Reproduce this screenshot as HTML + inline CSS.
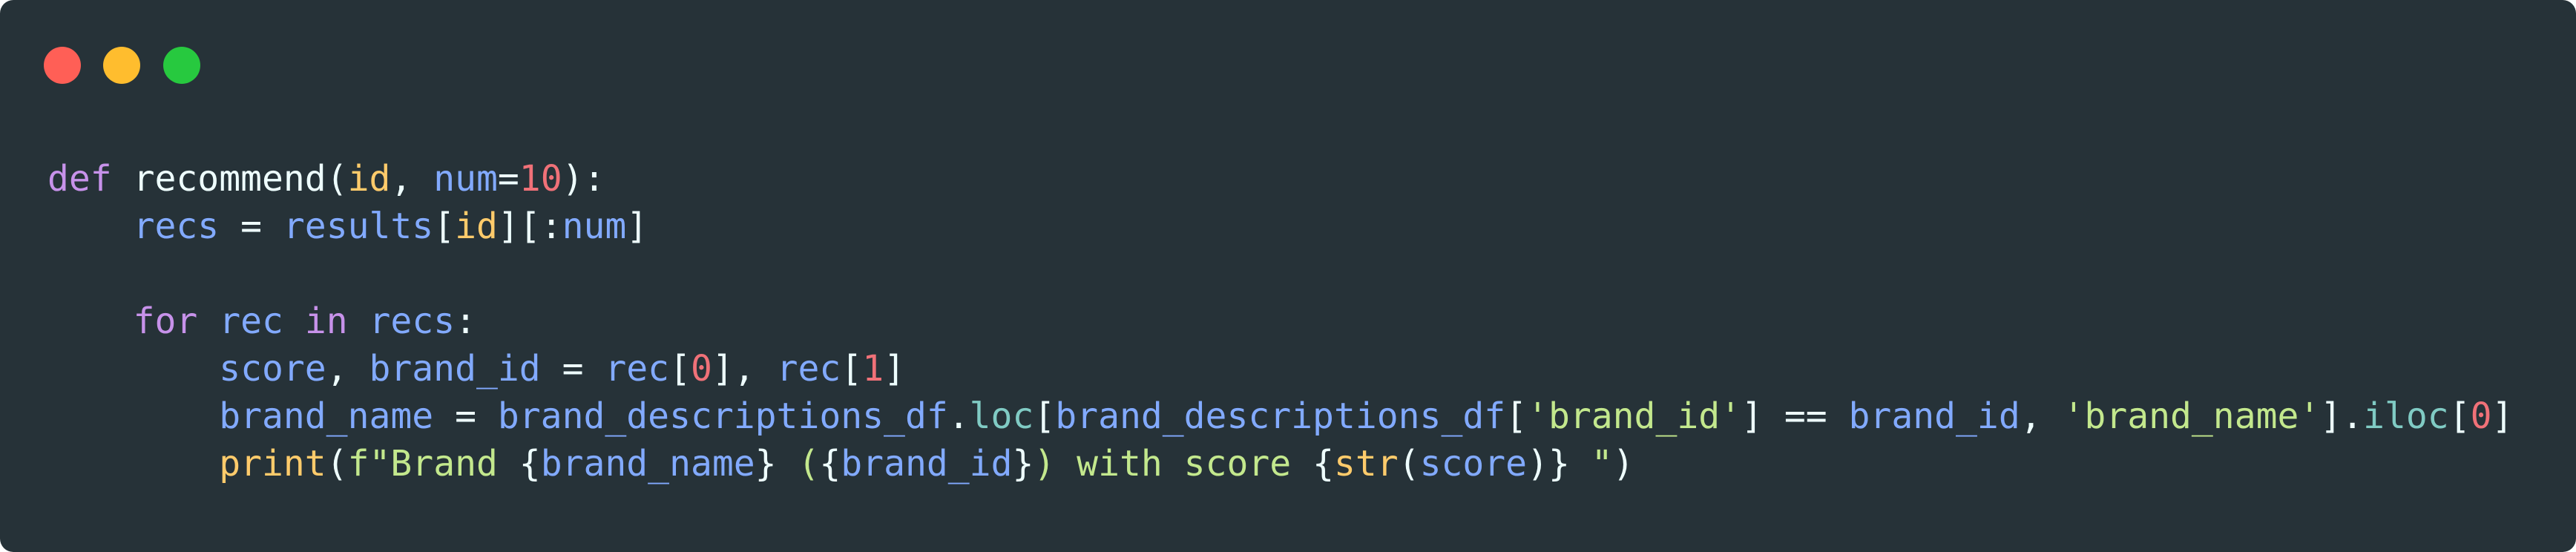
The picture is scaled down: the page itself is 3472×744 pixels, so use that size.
<!DOCTYPE html>
<html><head><meta charset="utf-8"><style>
html,body{margin:0;padding:0;background:#fff;}
.win{position:absolute;left:0;top:0;width:3472px;height:744px;background:#263238;border-radius:18px;overflow:hidden;}
.dot{position:absolute;top:63px;width:50px;height:50px;border-radius:50%;}
pre{position:absolute;left:64px;top:209px;margin:0;font-family:"DejaVu Sans Mono","Liberation Mono",monospace;font-size:48px;line-height:64px;color:#eeffff;}
.k{color:#c792ea}.v{color:#82aaff}.y{color:#ffcb6b}.n{color:#f78c6c}.s{color:#c3e88d}.c{color:#89ddff}.w{color:#eeffff}.r{color:#f07178}
</style></head><body><div class="win">
<div class="dot" style="left:59px;background:#ff5f56;"></div>
<div class="dot" style="left:139px;background:#ffbd2e;"></div>
<div class="dot" style="left:220px;background:#27c93f;"></div>
<pre><span class="k">def</span> recommend(<span class="y">id</span>, <span class="v">num</span>=<span class="r">10</span>):
    <span class="v">recs</span> = <span class="v">results</span>[<span class="y">id</span>][:<span class="v">num</span>]

    <span class="k">for</span> <span class="v">rec</span> <span class="k">in</span> <span class="v">recs</span>:
        <span class="v">score</span>, <span class="v">brand_id</span> = <span class="v">rec</span>[<span class="r">0</span>], <span class="v">rec</span>[<span class="r">1</span>]
        <span class="v">brand_name</span> = <span class="v">brand_descriptions_df</span>.<span class="c" style="color:#80cbc4">loc</span>[<span class="v">brand_descriptions_df</span>[<span class="s">'brand_id'</span>] == <span class="v">brand_id</span>, <span class="s">'brand_name'</span>].<span style="color:#80cbc4">iloc</span>[<span class="r">0</span>]
        <span class="y">print</span>(<span class="s">f"Brand </span>{<span class="v">brand_name</span>}<span class="s"> (</span>{<span class="v">brand_id</span>}<span class="s">) with score </span>{<span class="y">str</span>(<span class="v">score</span>)}<span class="s"> "</span>)</pre>
</div></body></html>
